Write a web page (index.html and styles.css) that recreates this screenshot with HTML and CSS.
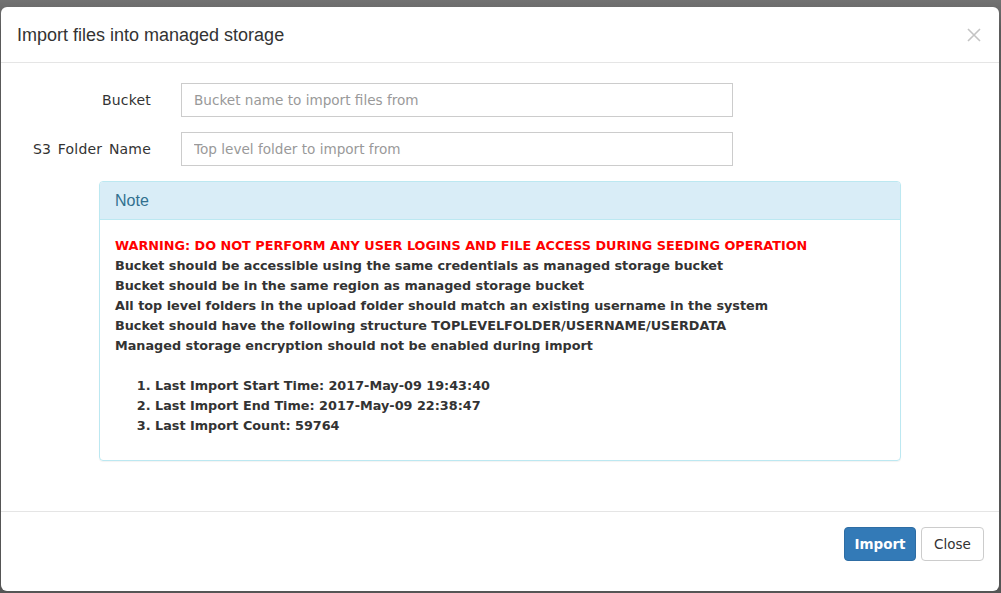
FILE: index.html
```html
<!DOCTYPE html>
<html>
<head>
<meta charset="utf-8">
<link rel="stylesheet" href="styles.css">
</head>
<body>
<div class="modal">
  <div class="modal-header">
    <h4 class="modal-title">Import files into managed storage</h4>
    <button class="close" type="button" aria-label="Close">
      <svg width="14" height="14" viewBox="0 0 14 14"><path d="M1 1L13 13M13 1L1 13" stroke="#c4c4c4" stroke-width="1.6" fill="none"/></svg>
    </button>
  </div>
  <div class="modal-body">
    <div class="form-row">
      <label class="form-label">Bucket</label>
      <div class="form-field"><input class="form-input" type="text" placeholder="Bucket name to import files from"></div>
    </div>
    <div class="form-row">
      <label class="form-label">S3 Folder Name</label>
      <div class="form-field"><input class="form-input" type="text" placeholder="Top level folder to import from"></div>
    </div>
    <div class="panel">
      <div class="panel-heading">Note</div>
      <div class="panel-body">
        <div class="warning">WARNING: DO NOT PERFORM ANY USER LOGINS AND FILE ACCESS DURING SEEDING OPERATION</div>
        <div class="note-line">Bucket should be accessible using the same credentials as managed storage bucket</div>
        <div class="note-line">Bucket should be in the same region as managed storage bucket</div>
        <div class="note-line">All top level folders in the upload folder should match an existing username in the system</div>
        <div class="note-line">Bucket should have the following structure TOPLEVELFOLDER/USERNAME/USERDATA</div>
        <div class="note-line">Managed storage encryption should not be enabled during import</div>
        <ol class="stats">
          <li>Last Import Start Time: 2017-May-09 19:43:40</li>
          <li>Last Import End Time: 2017-May-09 22:38:47</li>
          <li>Last Import Count: 59764</li>
        </ol>
      </div>
    </div>
  </div>
  <div class="modal-footer">
    <button class="btn btn-primary" type="button">Import</button>
    <button class="btn btn-default" type="button">Close</button>
  </div>
</div>
</body>
</html>
```

FILE: styles.css
```css
html, body {
  margin: 0;
  padding: 0;
  height: 100%;
}
body {
  background: linear-gradient(#727272, #5a5a5a 30px, #555555);
  font-family: "DejaVu Sans", Verdana, sans-serif;
  font-size: 13px;
  color: #333;
  overflow: hidden;
}
.modal {
  margin: 7px 2px 0 1px;
  height: 584px;
  background: #fff;
  border-radius: 6px;
  display: flex;
  flex-direction: column;
  box-sizing: border-box;
}
.modal-header {
  height: 56px;
  box-sizing: border-box;
  border-bottom: 1px solid #e5e5e5;
  display: flex;
  align-items: center;
  justify-content: space-between;
  padding: 0 18px 0 16px;
}
.modal-title {
  margin: 0;
  font-family: "Liberation Sans", Arial, sans-serif;
  font-weight: normal;
  font-size: 18px;
  color: #333;
  line-height: 26px;
}
.close {
  background: none;
  border: 0;
  padding: 0;
  margin: 0;
  display: flex;
  width: 14px;
  height: 14px;
}
.modal-body {
  padding: 20px 0 0 0;
  height: 449px;
  box-sizing: border-box;
  border-bottom: 1px solid #e5e5e5;
}
.form-row {
  display: flex;
  align-items: center;
  margin-bottom: 15px;
}
.form-label {
  width: 150px;
  text-align: right;
  font-size: 14px;
  letter-spacing: 0.2px;
  word-spacing: 2px;
  color: #333;
  padding-right: 30px;
}
.form-field {
  width: 552px;
}
.form-input {
  width: 100%;
  height: 34px;
  box-sizing: border-box;
  border: 1px solid #ccc;
  border-radius: 0;
  padding: 0 12px;
  font-family: "DejaVu Sans", Verdana, sans-serif;
  font-size: 13.6px;
  color: #555;
  outline: none;
}
.form-input::placeholder {
  color: #999;
}
.panel {
  margin-left: 98px;
  width: 802px;
  border: 1px solid #bce8f1;
  border-radius: 4px;
  box-sizing: border-box;
  box-shadow: 0 1px 1px rgba(0,0,0,.05);
}
.panel-heading {
  background: #d9edf7;
  color: #31708f;
  border-bottom: 1px solid #bce8f1;
  border-radius: 3px 3px 0 0;
  padding: 10px 15px;
  font-family: "Liberation Sans", Arial, sans-serif;
  font-size: 16px;
  line-height: 17px;
}
.panel-body {
  padding: 16px 15px 14px 15px;
  font-weight: bold;
  font-size: 12.8px;
  line-height: 20px;
  color: #333;
}
.warning {
  color: #ff0000;
}
.stats {
  margin: 20px 0 10px 0;
  padding-left: 40px;
}
.modal-footer {
  display: flex;
  justify-content: flex-end;
  gap: 5px;
  padding: 15px 15px 0 0;
}
.btn {
  height: 34px;
  box-sizing: border-box;
  border-radius: 4px;
  font-family: "DejaVu Sans", Verdana, sans-serif;
  font-size: 13.5px;
  padding: 0 8px;
}
.btn-primary {
  background: #337ab7;
  border: 1px solid #2e6da4;
  color: #fff;
  font-weight: bold;
  width: 72px;
}
.btn-default {
  background: #fff;
  border: 1px solid #ccc;
  color: #333;
  width: 63px;
}
```
